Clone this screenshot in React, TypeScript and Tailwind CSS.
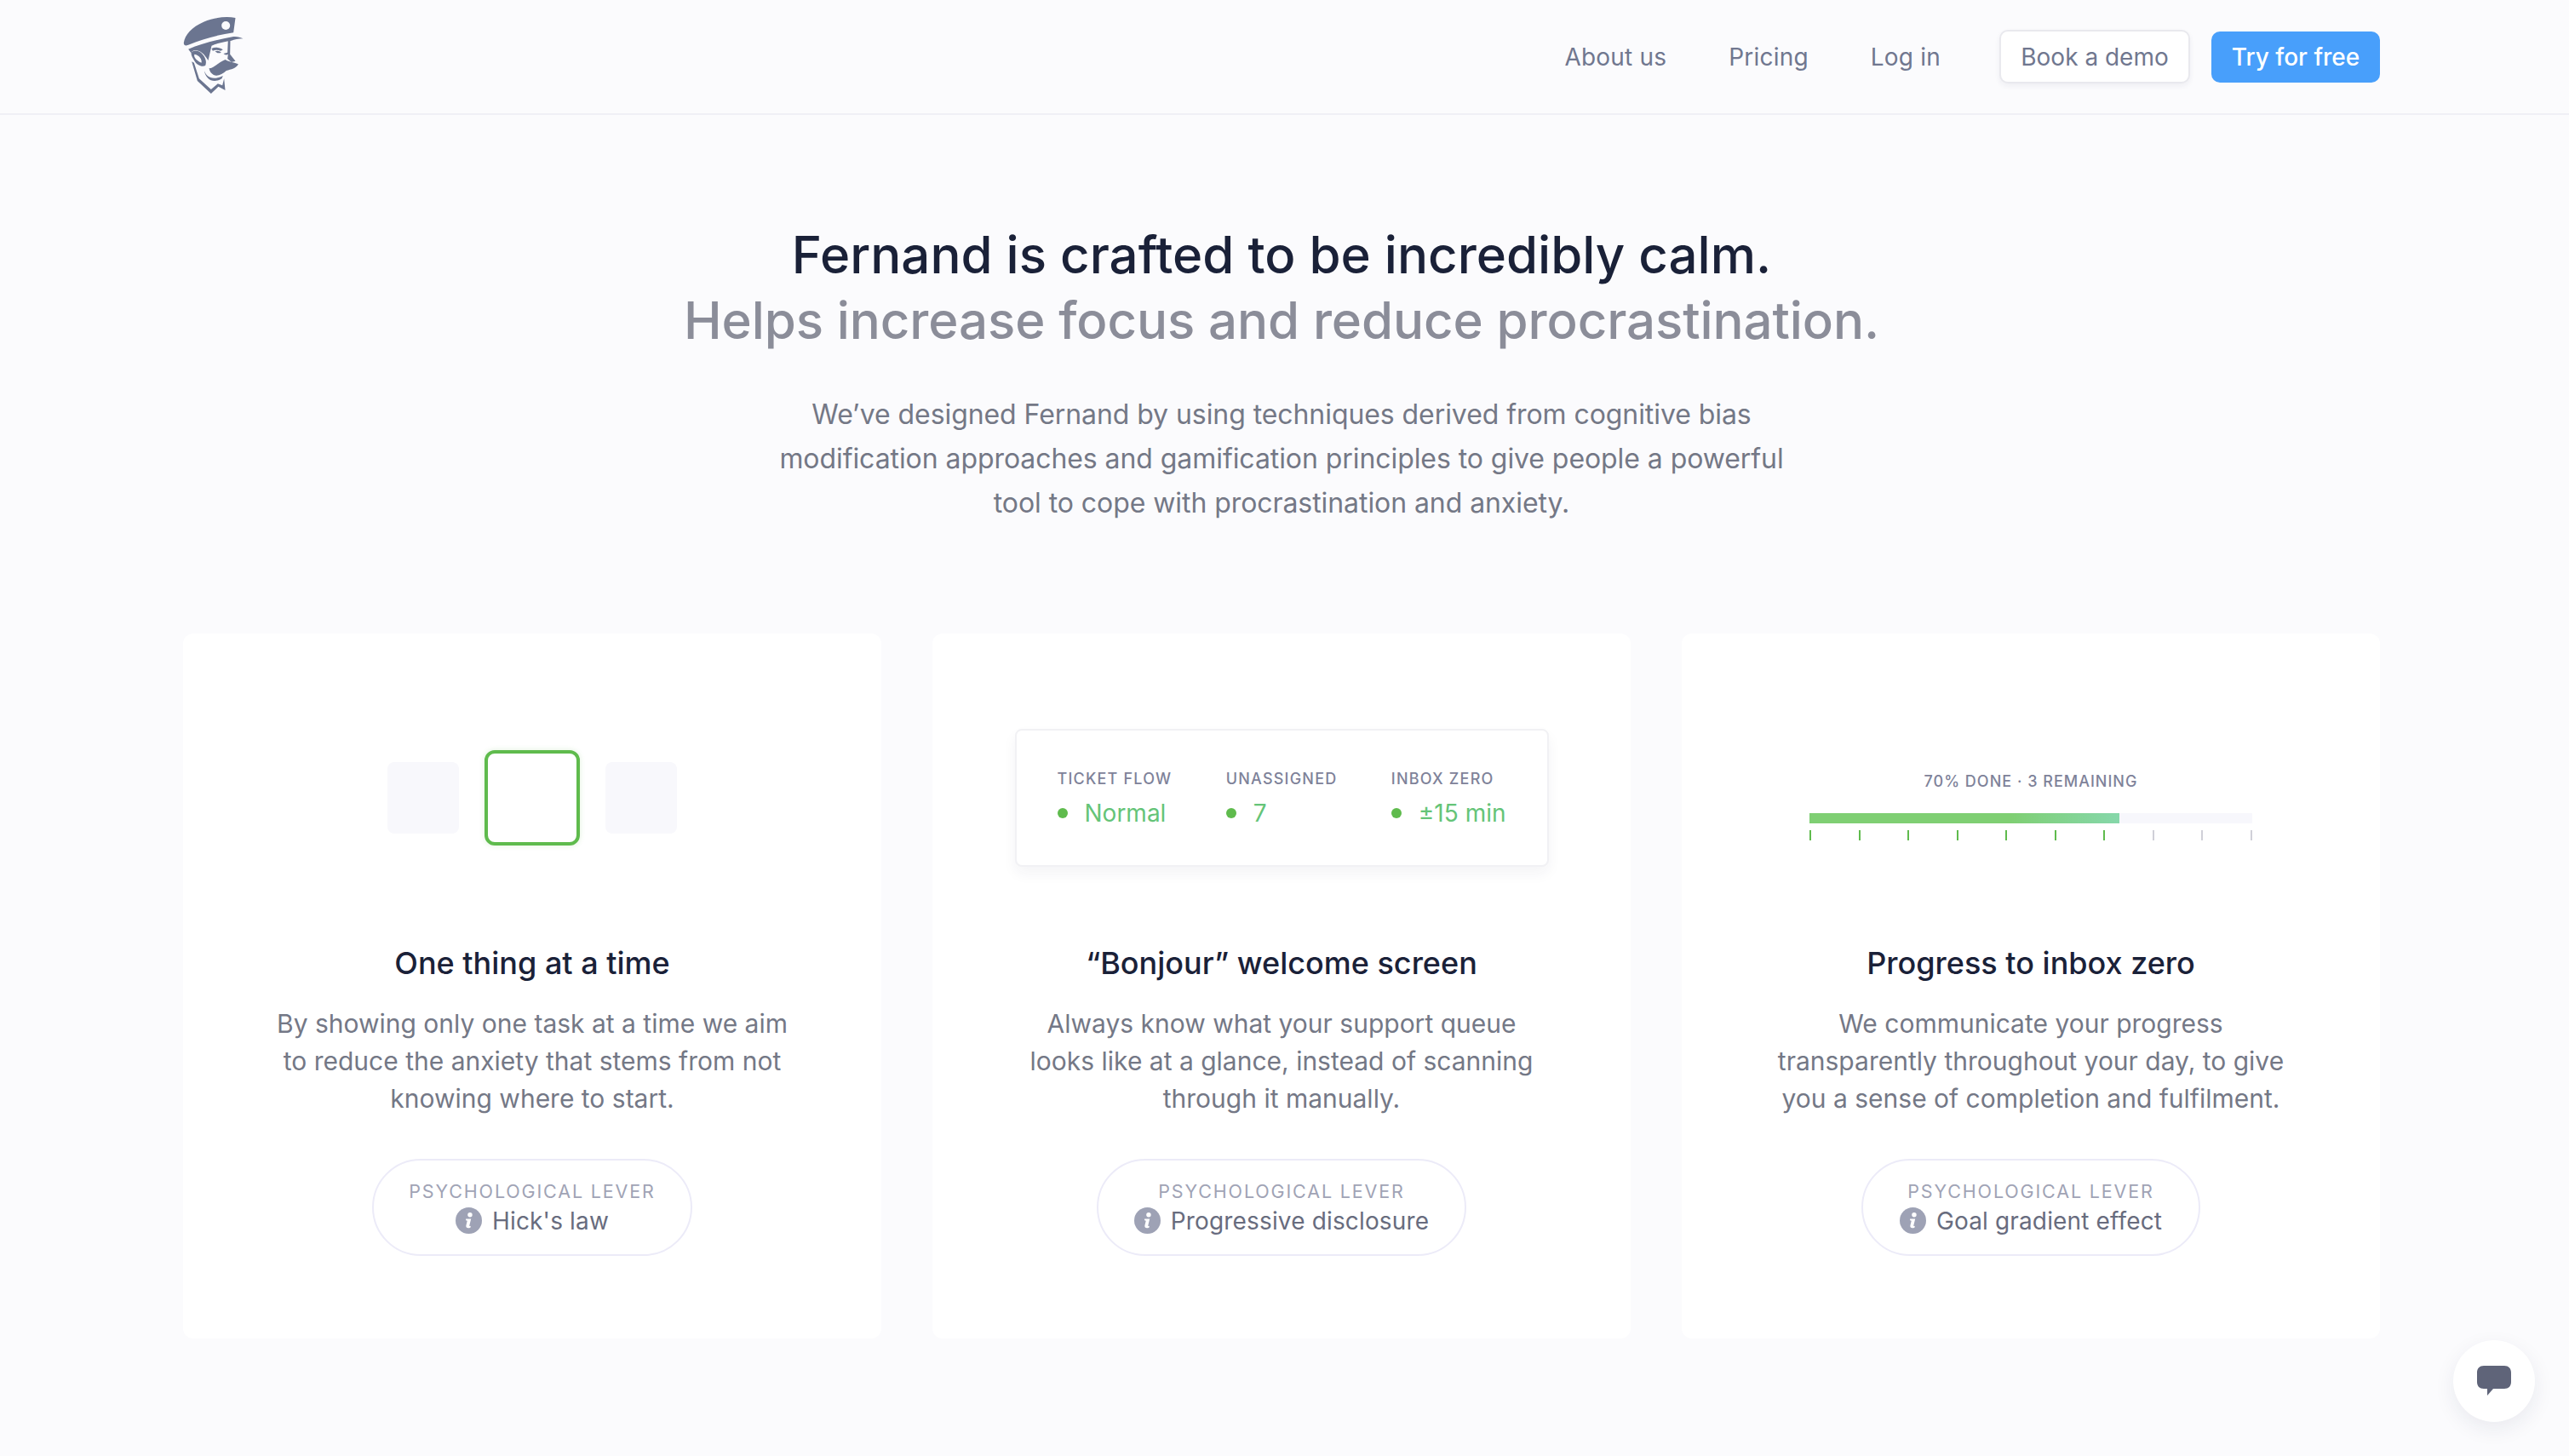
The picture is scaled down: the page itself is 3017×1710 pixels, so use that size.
const font = "font-['Inter','Liberation_Sans',sans-serif]";

function Logo() {
  return (
    <svg viewBox="28 15 212 270" className="h-[90px] w-[71px]" fill="#6b7590">
      {/* cap */}
      <path d="M30 105 C34 78 58 50 100 32 C140 16 180 12 212 18 L205 70 C150 78 95 92 50 112 C38 118 29 116 30 105 Z" />
      <circle cx="178" cy="45" r="15" fill="#fbfbfd" />
      {/* visor and hair */}
      <path d="M46 128 C90 108 150 94 205 84 C218 83 230 86 239 91 C222 92 208 94 198 98 C170 102 145 108 128 116 L116 168 C108 155 96 136 74 132 C64 131 58 136 56 142 Z" />
      {/* ear */}
      <path d="M56 142 C62 130 82 130 96 146 C106 158 112 172 106 186 C94 192 76 184 68 170 C62 160 56 152 56 142 Z M68 146 C64 152 70 166 92 176 C96 166 84 148 68 146 Z" fillRule="evenodd" />
      {/* brow and eye */}
      <path d="M128 126 C140 120 156 122 168 130 L160 134 C150 130 140 130 132 134 Z" />
      <path d="M140 136 C148 132 156 134 162 140 C154 144 146 142 140 136 Z" />
      {/* nose */}
      <path d="M186 96 L194 96 L193 146 L212 170 L198 174 L184 162 L186 146 C180 150 174 148 170 144 L184 140 Z" />
      {/* moustache */}
      <path d="M119 196 C134 196 150 176 176 165 C186 172 204 174 222 181 C216 196 196 200 180 204 C166 216 148 226 134 218 C126 214 121 206 119 196 Z" />
      {/* jaw and collar */}
      <path d="M58 172 L66 176 L84 232 L126 270 L150 250 L166 256 L172 232 L176 273 L152 260 L126 285 L78 240 Z" />
      {/* chin */}
      <path d="M102 204 C110 226 130 240 168 222 L164 232 C134 250 108 236 102 204 Z" />
    </svg>
  );
}

function InfoIcon() {
  return (
    <svg viewBox="0 0 32 32" className="h-[31px] w-[31px] shrink-0">
      <circle cx="16" cy="16" r="16" fill="#9ea2b5" />
      <circle cx="17.5" cy="9" r="2.8" fill="#fff" />
      <path d="M12.5 14 H18.8 L16.8 22 C16.6 22.8 17 23 18.4 22.5 L18 24.4 C15 25.6 12.2 25 12.8 22 L14.2 16.2 L12.5 15.8 Z" fill="#fff" />
    </svg>
  );
}

function Lever({ name, width }: { name: string; width: string }) {
  return (
    <div className={`mx-auto flex h-[114px] flex-col items-center justify-center rounded-full border-2 border-[#ecebf8] ${width}`}>
      <p className="pt-[1px] text-[21.5px] leading-[30px] tracking-[1.85px] text-[#a0a3b5]">PSYCHOLOGICAL LEVER</p>
      <div className="flex items-center gap-[12px]">
        <InfoIcon />
        <span className="text-[28px] leading-[40px] tracking-[0.15px] text-[#686c7e]">{name}</span>
      </div>
    </div>
  );
}

function Card({
  art,
  title,
  lines,
  lever,
  leverWidth,
}: {
  art: React.ReactNode;
  title: string;
  lines: string[];
  lever: string;
  leverWidth: string;
}) {
  return (
    <div className="flex h-[828px] flex-col rounded-[12px] bg-white">
      <div className="flex h-[364px] items-center justify-center pt-[22px]">{art}</div>
      <h3 className="text-center text-[36px] leading-[46px] font-medium text-[#1a2138]">{title}</h3>
      <div className="mt-[26px] text-center text-[30px] leading-[44px] text-[#747886]">
        {lines.map((l) => (
          <p key={l}>{l}</p>
        ))}
      </div>
      <div className="mt-[49px]">
        <Lever name={lever} width={leverWidth} />
      </div>
    </div>
  );
}

function Stat({ label, value }: { label: string; value: string }) {
  return (
    <div>
      <p className="text-[18px] leading-[24px] font-medium tracking-[1.2px] text-[#7e8299]">{label}</p>
      <div className="mt-[11px] flex items-center gap-[20px]">
        <span className="h-[12px] w-[12px] rounded-full bg-[#5fbb4d]" />
        <span className="text-[28px] leading-[34px] text-[#65c478]">{value}</span>
      </div>
    </div>
  );
}

const ticks = [1, 1, 1, 1, 1, 1, 1, 0, 0, 0];

export default function App() {
  return (
    <div className={`relative min-h-[1710px] overflow-hidden bg-[#fbfbfd] ${font}`}>
      <header className="h-[135px] border-b-2 border-[#f0f0f6]">
        <div className="ml-[215px] flex h-[133px] w-[2580px] items-center justify-between">
          <div className="self-start pt-[20px]">
            <Logo />
          </div>
          <nav className="flex items-center text-[28px] text-[#70778f]">
            <a className="mr-[73px] tracking-[0.2px]">About us</a>
            <a className="mr-[73px] tracking-[0.2px]">Pricing</a>
            <a className="mr-[69px] tracking-[0.2px]">Log in</a>
            <a className="flex h-[63px] w-[224px] items-center justify-center rounded-[10px] border-2 border-[#e9e9ee] bg-white shadow-[0_3px_6px_rgba(30,40,80,0.06)]">
              Book a demo
            </a>
            <a className="ml-[25px] flex h-[60px] w-[198px] items-center justify-center rounded-[10px] bg-[#489ffb] font-medium text-white">
              Try for free
            </a>
          </nav>
        </div>
      </header>

      <section className="ml-[215px] w-[2580px] pt-[126px] text-center">
        <h1 className="text-[60px] leading-[77px] font-medium text-[#1a2138]">Fernand is crafted to be incredibly calm.</h1>
        <h2 className="text-[60px] leading-[77px] font-medium tracking-[-0.1px] text-[#8b8d99]">Helps increase focus and reduce procrastination.</h2>
        <div className="mt-[46px] text-[32px] leading-[52px] tracking-[-0.07px] text-[#747886]">
          <p>We’ve designed Fernand by using techniques derived from cognitive bias</p>
          <p>modification approaches and gamification principles to give people a powerful</p>
          <p>tool to cope with procrastination and anxiety.</p>
        </div>
      </section>

      <section className="mt-[127px] ml-[215px] grid w-[2580px] grid-cols-3 gap-[60px]">
        <Card
          title="One thing at a time"
          lines={[
            "By showing only one task at a time we aim",
            "to reduce the anxiety that stems from not",
            "knowing where to start.",
          ]}
          lever="Hick's law"
          leverWidth="w-[376px]"
          art={
            <div className="flex items-center gap-[30px]">
              <div className="h-[84px] w-[84px] rounded-[8px] bg-[#f8f8fc]" />
              <div className="h-[112px] w-[112px] rounded-[12px] border-4 border-[#5fbb4d] bg-white shadow-[0_0_6px_rgba(95,187,77,0.2)]" />
              <div className="h-[84px] w-[84px] rounded-[8px] bg-[#f8f8fc]" />
            </div>
          }
        />
        <Card
          title="“Bonjour” welcome screen"
          lines={[
            "Always know what your support queue",
            "looks like at a glance, instead of scanning",
            "through it manually.",
          ]}
          lever="Progressive disclosure"
          leverWidth="w-[434px]"
          art={
            <div className="flex h-[162px] w-[627px] items-center justify-between rounded-[8px] border-2 border-[#f1f1f4] bg-white px-[48px] shadow-[0_8px_16px_rgba(30,40,80,0.05)]">
              <Stat label="TICKET FLOW" value="Normal" />
              <Stat label="UNASSIGNED" value="7" />
              <Stat label="INBOX ZERO" value="±15 min" />
            </div>
          }
        />
        <Card
          title="Progress to inbox zero"
          lines={[
            "We communicate your progress",
            "transparently throughout your day, to give",
            "you a sense of completion and fulfilment.",
          ]}
          lever="Goal gradient effect"
          leverWidth="w-[398px]"
          art={
            <div className="mt-[18px] w-[520px]">
              <p className="text-center text-[18px] leading-[24px] font-medium tracking-[1px] text-[#7e8299]">
                70% DONE · 3 REMAINING
              </p>
              <div className="mt-[25px] h-[12px] w-full bg-[#f7f7fc]">
                <div className="h-full w-[70%] bg-gradient-to-r from-[#7fcf73] from-[65%] to-[#86d7aa]" />
              </div>
              <div className="mt-[8px] flex justify-between">
                {ticks.map((on, i) => (
                  <span key={i} className={on ? "h-[12px] w-[2px] bg-[#5fbb4d]" : "h-[12px] w-[2px] bg-[#d0d0d8]"} />
                ))}
              </div>
            </div>
          }
        />
      </section>

      <div className="absolute top-[1574px] left-[2881px] flex h-[96px] w-[96px] items-center justify-center rounded-full bg-white shadow-[0_8px_24px_rgba(30,40,80,0.08)]">
        <svg viewBox="0 0 40 36" className="h-[36px] w-[40px]" fill="#5f6479">
          <path d="M8 0 H32 C37 0 40 3 40 8 V19 C40 24 37 27 32 27 H19 L12 35 V27 H8 C3 27 0 24 0 19 V8 C0 3 3 0 8 0 Z" />
        </svg>
      </div>
    </div>
  );
}
